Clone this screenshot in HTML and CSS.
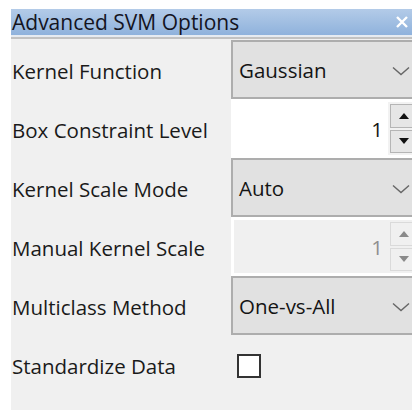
FILE: index.html
```html
<!DOCTYPE html>
<html lang="en">
<head>
<meta charset="utf-8">
<title>Advanced SVM Options</title>
<link rel="stylesheet" href="styles.css">
</head>
<body>
<div class="window">
  <div class="titlebar">
    <span class="title">Advanced SVM Options</span>
    <svg class="close" viewBox="0 0 14 14" width="14" height="14" aria-hidden="true">
      <path d="M2 2 L12 12 M12 2 L2 12" stroke="#fff" stroke-width="2.4" fill="none"/>
    </svg>
  </div>
  <div class="panel">
    <div class="form">
      <span class="label">Kernel Function</span>
      <div class="select">
        <span class="value">Gaussian</span>
        <svg class="chevron" viewBox="0 0 18 10" width="18" height="10" aria-hidden="true"><path d="M1 1.5 L9 8.5 L17 1.5" stroke="#666" stroke-width="1.4" fill="none"/></svg>
      </div>

      <span class="label">Box Constraint Level</span>
      <div class="spinner">
        <span class="field">1</span>
        <div class="spin-buttons">
          <span class="spin-btn"><svg viewBox="0 0 10 6" width="10" height="6"><path d="M0 6 L5 0 L10 6 Z" fill="#111"/></svg></span>
          <span class="spin-btn"><svg viewBox="0 0 10 6" width="10" height="6"><path d="M0 0 L5 6 L10 0 Z" fill="#111"/></svg></span>
        </div>
      </div>

      <span class="label">Kernel Scale Mode</span>
      <div class="select">
        <span class="value">Auto</span>
        <svg class="chevron" viewBox="0 0 18 10" width="18" height="10" aria-hidden="true"><path d="M1 1.5 L9 8.5 L17 1.5" stroke="#666" stroke-width="1.4" fill="none"/></svg>
      </div>

      <span class="label">Manual Kernel Scale</span>
      <div class="spinner disabled">
        <span class="field">1</span>
        <div class="spin-buttons">
          <span class="spin-btn"><svg viewBox="0 0 10 6" width="10" height="6"><path d="M0 6 L5 0 L10 6 Z" fill="#8a8a8a"/></svg></span>
          <span class="spin-btn"><svg viewBox="0 0 10 6" width="10" height="6"><path d="M0 0 L5 6 L10 0 Z" fill="#8a8a8a"/></svg></span>
        </div>
      </div>

      <span class="label">Multiclass Method</span>
      <div class="select">
        <span class="value">One-vs-All</span>
        <svg class="chevron" viewBox="0 0 18 10" width="18" height="10" aria-hidden="true"><path d="M1 1.5 L9 8.5 L17 1.5" stroke="#666" stroke-width="1.4" fill="none"/></svg>
      </div>

      <span class="label">Standardize Data</span>
      <div class="check-cell"><span class="checkbox"></span></div>
    </div>
  </div>
</div>
</body>
</html>
```

FILE: styles.css
```css
html, body {
  margin: 0;
  padding: 0;
  background: #ffffff;
  overflow: hidden;
  height: 410px;
}

body {
  font-family: "Open Sans", "Noto Sans", sans-serif;
  font-size: 20.5px;
  color: #1a1a1a;
}

.window {
  margin: 9px 0 0 11px;
  width: 406px;
  height: 401px;
  display: flex;
  flex-direction: column;
  background: #f0f0f0;
}

.titlebar {
  height: 26px;
  flex: none;
  display: flex;
  align-items: center;
  justify-content: space-between;
  padding: 0 8px 0 1px;
  background: linear-gradient(#b3cbe8, #8fb2dc);
  border-bottom: 2px solid #e6ebf1;
  box-shadow: 0 2px 0 #c2c2c2;
}

.title {
  font-size: 21px;
  color: #14141e;
  line-height: 26px;
  white-space: nowrap;
}

.close {
  display: block;
}

.panel {
  flex: 1;
  padding-top: 3px;
}

.form {
  display: grid;
  grid-template-columns: 220px 1fr;
  grid-auto-rows: 59px;
  align-items: stretch;
}

.label {
  display: flex;
  align-items: center;
  padding: 2px 0 0 1px;
  white-space: nowrap;
}

.select {
  display: flex;
  align-items: center;
  justify-content: space-between;
  box-sizing: border-box;
  background: #e1e1e1;
  border: 2px solid #adadad;
  border-right: none;
  padding: 0 7px 0 6px;
}

.value {
  color: #141414;
}

.chevron {
  display: block;
  margin-top: 3px;
}

.spinner {
  display: flex;
  align-items: stretch;
  box-sizing: border-box;
  background: #ffffff;
  border: 3px solid #ffffff;
  border-right: none;
}

.field {
  flex: 1;
  display: flex;
  align-items: center;
  justify-content: flex-end;
  padding-right: 5px;
  color: #141414;
}

.spin-buttons {
  width: 27px;
  display: flex;
  flex-direction: column;
  gap: 2px;
  padding: 2px 0 2px 2px;
  background: #f2f2f2;
}

.spin-btn {
  flex: 1;
  display: flex;
  align-items: center;
  justify-content: center;
  background: #e6e6e6;
  border: 1px solid #b5b5b5;
  border-right: none;
}

.spin-btn svg {
  display: block;
}

.spinner.disabled .field {
  background: #f0f0f0;
  color: #8f8f8f;
}

.spinner.disabled .spin-buttons {
  background: #f0f0f0;
}

.spinner.disabled .spin-btn {
  background: #f0f0f0;
  border-color: #dadada;
}

.check-cell {
  display: flex;
  align-items: center;
  padding: 2px 0 0 6px;
}

.checkbox {
  width: 20px;
  height: 20px;
  background: #ffffff;
  border: 2px solid #333333;
}
```
